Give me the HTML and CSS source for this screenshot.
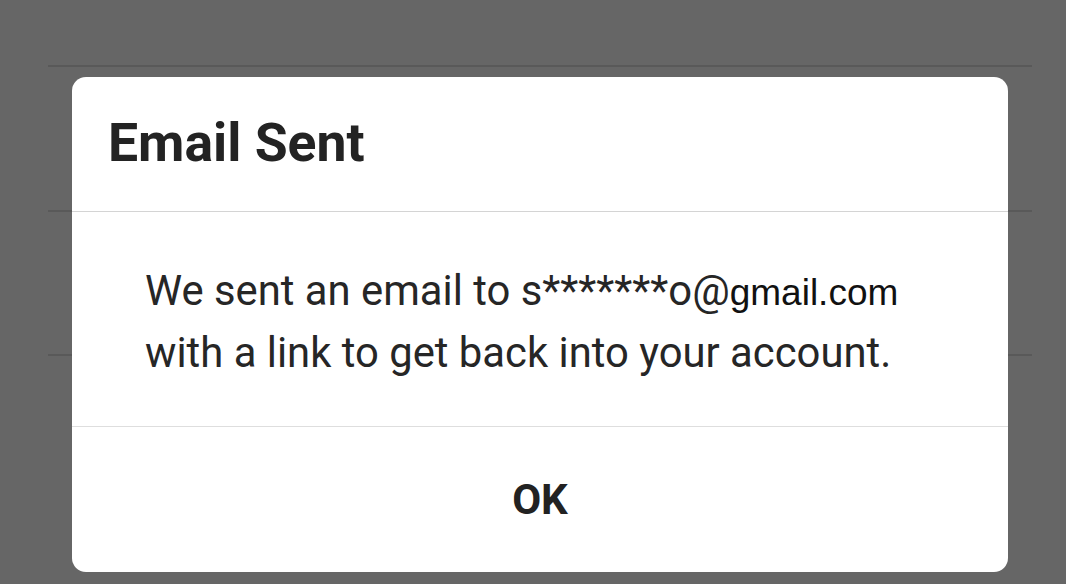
FILE: index.html
```html
<!DOCTYPE html>
<html lang="en">
<head>
<meta charset="utf-8">
<title>Email Sent</title>
<link rel="stylesheet" href="styles.css">
</head>
<body>
<div class="page">
  <div class="list">
    <div class="row row-first"></div>
    <div class="row row-second"></div>
    <div class="row row-third"></div>
  </div>
</div>
<div class="overlay">
  <div class="dialog">
    <div class="dialog-header">
      <h1 class="dialog-title">Email Sent</h1>
    </div>
    <div class="dialog-body">
      <p class="dialog-text">We sent an email to s*******o@<span class="email-domain">gmail.com</span><br>with a link to get back into your account.</p>
    </div>
    <div class="dialog-footer">
      <button class="dialog-button" type="button">OK</button>
    </div>
  </div>
</div>
</body>
</html>
```

FILE: styles.css
```css
html, body {
  margin: 0;
  padding: 0;
}

body {
  width: 1066px;
  height: 584px;
  background: #666666;
  font-family: Roboto, "Noto Sans", sans-serif;
  overflow: hidden;
  position: relative;
}

.page {
  padding: 0 34px 0 48px;
}

.list {
  display: flex;
  flex-direction: column;
}

.row {
  border-bottom: 2px solid #595959;
}

.row-first { height: 65px; }
.row-second { height: 143px; }
.row-third { height: 142px; }

.overlay {
  position: absolute;
  left: 72px;
  top: 77px;
}

.dialog {
  width: 936px;
  height: 495px;
  background: #ffffff;
  border-radius: 14px;
  display: flex;
  flex-direction: column;
  overflow: hidden;
}

.dialog-header {
  height: 134px;
  display: flex;
  align-items: center;
  padding-left: 36px;
  border-bottom: 1px solid #d4d4d4;
}

.dialog-title {
  margin: 0;
  font-size: 53.5px;
  font-weight: 700;
  color: #232323;
  line-height: 1;
  margin-top: -2px;
}

.dialog-body {
  height: 215px;
  box-sizing: border-box;
  display: flex;
  align-items: center;
  padding-left: 73px;
  padding-top: 6px;
  border-bottom: 1px solid #dedede;
}

.dialog-text {
  margin: 0;
  font-size: 41.8px;
  line-height: 60px;
  color: #262626;
}

.email-domain {
  font-family: "Liberation Sans", Arial, sans-serif;
  color: #111111;
  font-size: 37px;
}

.dialog-footer {
  flex: 1;
  display: flex;
  align-items: center;
  justify-content: center;
}

.dialog-button {
  border: none;
  background: none;
  padding: 0;
  font-family: Roboto, "Noto Sans", sans-serif;
  font-size: 42px;
  font-weight: 700;
  color: #222222;
}
```
